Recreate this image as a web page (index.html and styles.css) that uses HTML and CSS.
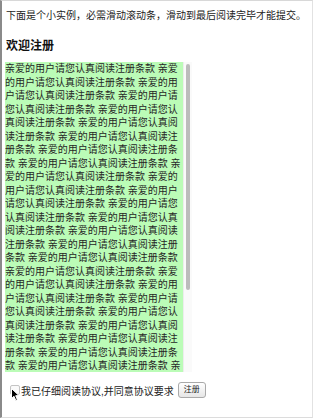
FILE: index.html
```html
<!DOCTYPE html>
<html lang="zh">
<head>
<meta charset="utf-8">
<title>欢迎注册</title>
<link rel="stylesheet" href="styles.css">
</head>
<body>
<div class="frame">
  <p class="intro">下面是个小实例，必需滑动滚动条，滑动到最后阅读完毕才能提交。</p>
  <h3 class="title">欢迎注册</h3>
  <div class="terms">
    <div class="terms-view">
      <p class="terms-text">亲爱的用户请您认真阅读注册条款 亲爱的用户请您认真阅读注册条款 亲爱的用户请您认真阅读注册条款 亲爱的用户请您认真阅读注册条款 亲爱的用户请您认真阅读注册条款 亲爱的用户请您认真阅读注册条款 亲爱的用户请您认真阅读注册条款 亲爱的用户请您认真阅读注册条款 亲爱的用户请您认真阅读注册条款 亲爱的用户请您认真阅读注册条款 亲爱的用户请您认真阅读注册条款 亲爱的用户请您认真阅读注册条款 亲爱的用户请您认真阅读注册条款 亲爱的用户请您认真阅读注册条款 亲爱的用户请您认真阅读注册条款 亲爱的用户请您认真阅读注册条款 亲爱的用户请您认真阅读注册条款 亲爱的用户请您认真阅读注册条款 亲爱的用户请您认真阅读注册条款 亲爱的用户请您认真阅读注册条款 亲爱的用户请您认真阅读注册条款 亲爱的用户请您认真阅读注册条款 亲爱的用户请您认真阅读注册条款 亲爱的用户请您认真阅读注册条款 亲爱的用户请您认真阅读注册条款 亲爱的用户请您认真阅读注册条款 亲爱的用户请您认真阅读注册条款 亲爱的用户请您认真阅读注册条款 亲爱的用户请您认真阅读注册条款 亲爱的用户请您认真阅读注册条款 亲爱的用户请您认真阅读注册条款 亲爱的用户请您认真阅读注册条款 亲爱的用户请您认真阅读注册条款 亲爱的用户请您认真阅读注册条款 亲爱的用户请您认真阅读注册条款</p>
    </div>
    <div class="scrollbar"><div class="thumb"></div></div>
  </div>
  <div class="agree">
    <label class="agree-label"><input class="check" type="checkbox" disabled>我已仔细阅读协议,并同意协议要求</label>
    <button class="btn" type="button">注册</button>
    <svg class="cursor" width="9" height="14" viewBox="0 0 9 14"><path d="M0.5 0.5 L0.5 10.5 L3 8.3 L4.8 12.5 L6.4 11.8 L4.7 7.7 L8 7.6 Z" fill="#000" stroke="#fff" stroke-width="1"/></svg>
  </div>
</div>
</body>
</html>
```
FILE: styles.css
```css
html, body {
  margin: 0;
  padding: 0;
  background: #fff;
}
.frame {
  position: relative;
  box-sizing: border-box;
  width: 313px;
  height: 418px;
  border-top: 1px solid #d8d8d8;
  border-right: 1px solid #e2e2e2;
  border-bottom: 1px solid #dcdcdc;
  border-left: 2px solid #8a8a8a;
  padding: 8px 0 0 3px;
  font-family: "Liberation Sans", "Noto Sans CJK SC", sans-serif;
  color: #222;
}
.intro {
  margin: 0 0 0 1px;
  font-size: 10px;
  line-height: 14px;
  white-space: nowrap;
  text-spacing-trim: space-all;
}
.title {
  margin: 15px 0 0 1px;
  font-size: 12px;
  line-height: 16px;
  font-weight: bold;
  color: #111;
}
.terms {
  display: flex;
  margin-top: 8px;
  height: 310px;
  width: 187px;
}
.terms-view {
  width: 178px;
  height: 100%;
  overflow: hidden;
}
.terms-text {
  margin: 0;
  background: #bbfcb7;
  font-size: 10px;
  line-height: 13.5px;
  color: #262626;
}
.scrollbar {
  box-sizing: border-box;
  width: 9px;
  height: 100%;
  padding: 2px 2px 0 2px;
  background: #fafafa;
  border-left: 1px solid #ededed;
}
.thumb {
  height: 226px;
  border-radius: 3px;
  background: #bcbcbc;
}
.agree {
  position: relative;
  display: flex;
  align-items: center;
  margin-top: 9px;
  height: 18px;
  font-size: 10px;
}
.agree-label {
  display: flex;
  align-items: center;
  color: #222;
}
.check {
  -webkit-appearance: none;
  appearance: none;
  box-sizing: border-box;
  width: 10px;
  height: 10px;
  margin: 0 1px 0 5px;
  border: 1px solid #c4c4c4;
  border-radius: 2px;
  background: #fafafa;
}
.btn {
  margin-left: 4px;
  padding: 1px 5px;
  font-family: "Liberation Sans", "Noto Sans CJK SC", sans-serif;
  font-size: 8px;
  line-height: 12px;
  color: #222;
  border: 1px solid #a9a9a9;
  border-radius: 3px;
  background: linear-gradient(#ffffff, #e6e6e6);
}
.cursor {
  position: absolute;
  left: 6px;
  top: 7px;
}
```
